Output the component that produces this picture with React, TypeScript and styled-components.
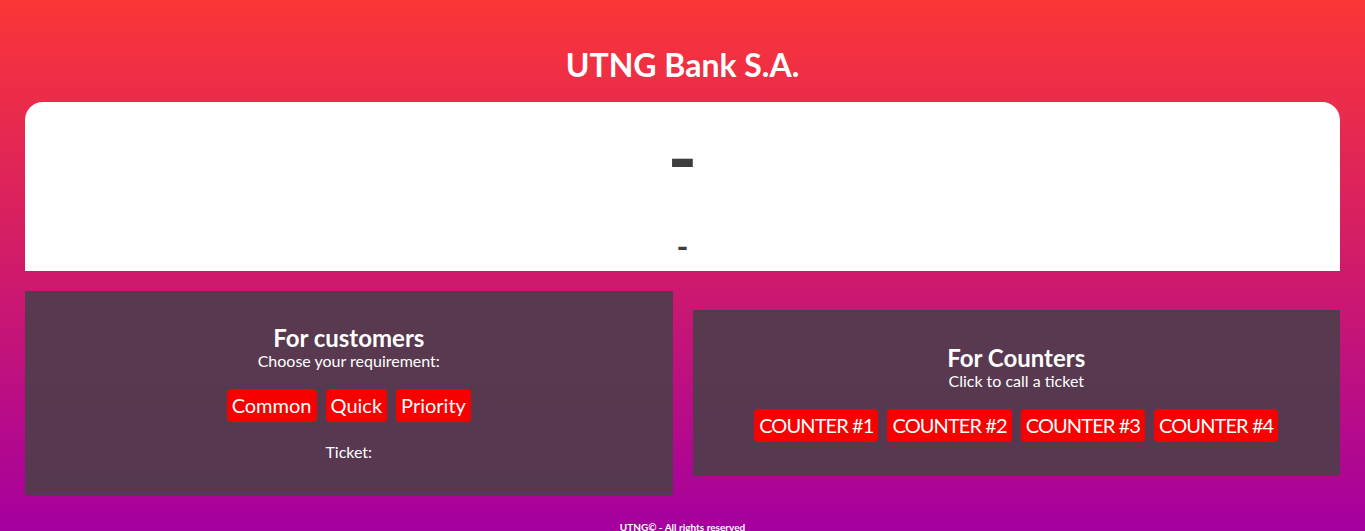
import React from "react";
import styled, { createGlobalStyle } from "styled-components";

const Global = createGlobalStyle`
  html, body { margin: 0; padding: 0; }
  body {
    min-height: 100vh;
    background: linear-gradient(180deg, #fb3636 0%, #a5009f 100%);
    font-family: "Trebuchet MS", Lato, "Open Sans", sans-serif;
    color: #fff;
  }
`;

const Page = styled.div`
  min-height: 531px;
  padding: 0 25px;
  box-sizing: border-box;
  display: flex;
  flex-direction: column;
`;

const Title = styled.h1`
  margin: 0;
  height: 102px;
  display: flex;
  align-items: center;
  justify-content: center;
  padding-top: 26px;
  box-sizing: border-box;
  font-size: 32px;
  font-weight: 700;
`;

const Display = styled.section`
  background: #fff;
  height: 169px;
  border-radius: 18px 18px 0 0;
  display: flex;
  flex-direction: column;
  align-items: center;
  color: #3d3d3d;
`;

const CurrentTicket = styled.div`
  font-size: 80px;
  font-weight: 700;
  line-height: 1;
  margin-top: 14px;
`;

const CurrentCounter = styled.div`
  font-size: 32px;
  font-weight: 700;
  line-height: 1;
  margin-top: 34px;
`;

const Row = styled.div`
  display: grid;
  grid-template-columns: 1fr 1fr;
  column-gap: 20px;
  align-items: center;
  margin-top: 20px;
`;

const Card = styled.section<{ $h: number }>`
  background: rgba(80, 60, 75, 0.93);
  height: ${(p) => p.$h}px;
  display: flex;
  flex-direction: column;
  align-items: center;
  justify-content: center;
`;

const CardTitle = styled.h2`
  margin: 0;
  font-size: 24px;
  font-weight: 700;
  line-height: 26px;
`;

const CardText = styled.p`
  margin: 0;
  font-size: 16px;
  line-height: 20px;
`;

const Buttons = styled.div`
  display: flex;
  gap: 9px;
  margin-top: 18px;
`;

const Btn = styled.button<{ $tight?: boolean }>`
  background: #f70000;
  color: #fff;
  border: none;
  border-radius: 4px;
  height: 33px;
  padding: 0 5px;
  font-family: inherit;
  font-size: 20px;
  letter-spacing: ${(p) => (p.$tight ? "-0.9px" : "0")};
  cursor: pointer;
`;

const Ticket = styled.p`
  margin: 20px 0 0;
  font-size: 16px;
  line-height: 20px;
`;

const Footer = styled.footer`
  margin-top: auto;
  text-align: center;
  font-size: 10px;
  font-weight: 700;
  line-height: 12px;
  transform: translateY(2px);
`;

const counters = ["COUNTER #1", "COUNTER #2", "COUNTER #3", "COUNTER #4"];

export default function App() {
  return (
    <>
      <Global />
      <Page>
        <Title>UTNG Bank S.A.</Title>
        <Display>
          <CurrentTicket>-</CurrentTicket>
          <CurrentCounter>-</CurrentCounter>
        </Display>
        <Row>
          <Card $h={204}>
            <CardTitle>For customers</CardTitle>
            <CardText>Choose your requirement:</CardText>
            <Buttons>
              <Btn>Common</Btn>
              <Btn>Quick</Btn>
              <Btn>Priority</Btn>
            </Buttons>
            <Ticket>Ticket:</Ticket>
          </Card>
          <Card $h={166}>
            <CardTitle>For Counters</CardTitle>
            <CardText>Click to call a ticket</CardText>
            <Buttons>
              {counters.map((c) => (
                <Btn key={c} $tight>
                  {c}
                </Btn>
              ))}
            </Buttons>
          </Card>
        </Row>
        <Footer>UTNG© - All rights reserved</Footer>
      </Page>
    </>
  );
}
